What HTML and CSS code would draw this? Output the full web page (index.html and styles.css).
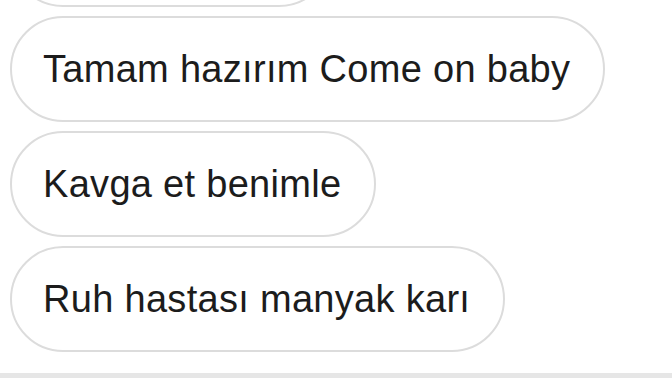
FILE: index.html
```html
<!DOCTYPE html>
<html lang="tr">

<head>
    <meta charset="UTF-8">
    <meta name="viewport" content="width=device-width, initial-scale=1.0">
    <title>Mesajlar</title>
    <link rel="stylesheet" href="styles.css">
</head>

<body>
    <div class="chat">
        <div class="messages">
            <!-- previous message, scrolled out of view -->
            <div class="bubble bubble-prev"></div>
            <div class="bubble">Tamam hazırım Come on baby</div>
            <div class="bubble">Kavga et benimle</div>
            <div class="bubble">Ruh hastası manyak karı</div>
        </div>
        <div class="composer"></div>
    </div>
</body>

</html>
```

FILE: styles.css
```css
/* Basic Reset */
* {
    margin: 0;
    padding: 0;
    box-sizing: border-box;
}

body {
    font-family: "Liberation Sans", Arial, sans-serif;
    background-color: #fff;
    color: #1c1c1c;
}

/* Chat window */
.chat {
    display: flex;
    flex-direction: column;
    height: 378px;
    overflow: hidden;
}

.messages {
    flex: 1;
    display: flex;
    flex-direction: column;
    justify-content: flex-end;
    align-items: flex-start;
    gap: 9px;
    padding: 0 0 21px 10px;
    overflow: hidden;
}

/* Message bubble */
.bubble {
    flex-shrink: 0;
    height: 106px;
    display: flex;
    align-items: center;
    padding: 0 33px 0 31px;
    border: 2px solid #dcdcdc;
    border-radius: 53px;
    font-size: 38px;
    letter-spacing: 0.3px;
    white-space: nowrap;
}

.bubble-prev {
    width: 322px;
}

/* Bottom input strip */
.composer {
    height: 5px;
    background-color: #e6e6e6;
}
```
